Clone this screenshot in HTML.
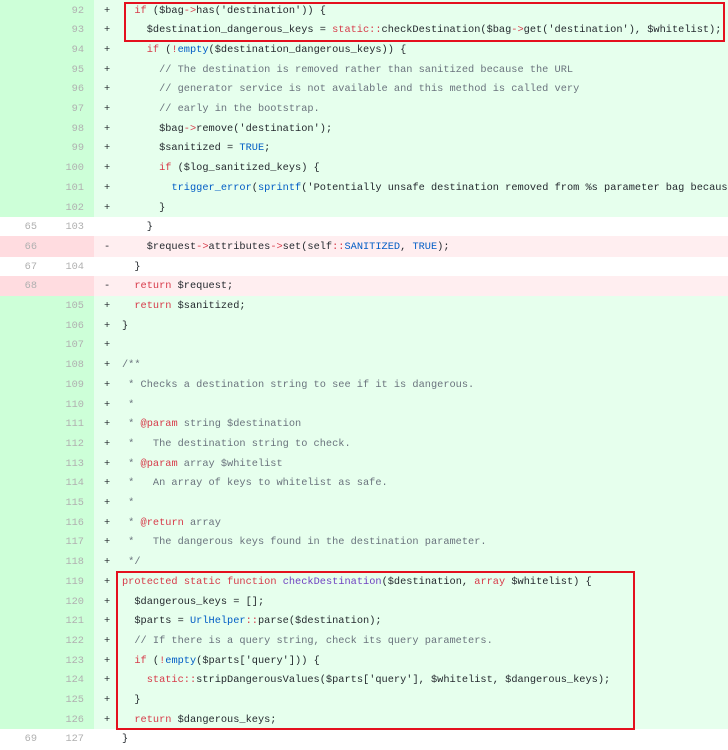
<!DOCTYPE html>
<html><head><meta charset="utf-8"><style>
*{margin:0;padding:0;box-sizing:border-box}
body{width:728px;height:750px;overflow:hidden;background:#fff;font-family:"Liberation Mono",monospace;font-size:10.3px;color:#24292e;position:relative}
.r{position:absolute;left:0;width:728px;height:20.4px;line-height:19.7px;white-space:pre}
.a{background:#e6ffed}.d{background:#ffeef0}
.n1,.n2{position:absolute;top:0;height:100%;width:47px;text-align:right;color:#b0b0b0;padding-right:10px;padding-top:1.5px}
.n1{left:0}.n2{left:47px}
.a .n1,.a .n2{background:#cdffd8}.d .n1,.d .n2{background:#ffdce0}
.m{position:absolute;left:104px;top:1.5px}
.c{position:absolute;left:122px;top:1.5px}
.k{color:#d73a49}.f{color:#005cc5}.p{color:#6f42c1}.cm{color:#6a737d}.s{color:#24292e}
.box{position:absolute;border:2.5px solid #e4101e}
</style></head><body>
<div class="r a" style="top:0px"><span class="n1"></span><span class="n2">92</span><span class="m">+</span><span class="c">  <span class="k">if</span> ($bag<span class="k">-&gt;</span>has(<span class="s">'destination'</span>)) {</span></div>
<div class="r a" style="top:19.7px"><span class="n1"></span><span class="n2">93</span><span class="m">+</span><span class="c">    $destination_dangerous_keys = <span class="k">static</span><span class="k">::</span>checkDestination($bag<span class="k">-&gt;</span>get(<span class="s">'destination'</span>), $whitelist);</span></div>
<div class="r a" style="top:39.4px"><span class="n1"></span><span class="n2">94</span><span class="m">+</span><span class="c">    <span class="k">if</span> (<span class="k">!</span><span class="f">empty</span>($destination_dangerous_keys)) {</span></div>
<div class="r a" style="top:59.1px"><span class="n1"></span><span class="n2">95</span><span class="m">+</span><span class="c">      <span class="cm">// The destination is removed rather than sanitized because the URL</span></span></div>
<div class="r a" style="top:78.8px"><span class="n1"></span><span class="n2">96</span><span class="m">+</span><span class="c">      <span class="cm">// generator service is not available and this method is called very</span></span></div>
<div class="r a" style="top:98.5px"><span class="n1"></span><span class="n2">97</span><span class="m">+</span><span class="c">      <span class="cm">// early in the bootstrap.</span></span></div>
<div class="r a" style="top:118.2px"><span class="n1"></span><span class="n2">98</span><span class="m">+</span><span class="c">      $bag<span class="k">-&gt;</span>remove(<span class="s">'destination'</span>);</span></div>
<div class="r a" style="top:137.9px"><span class="n1"></span><span class="n2">99</span><span class="m">+</span><span class="c">      $sanitized = <span class="f">TRUE</span>;</span></div>
<div class="r a" style="top:157.6px"><span class="n1"></span><span class="n2">100</span><span class="m">+</span><span class="c">      <span class="k">if</span> ($log_sanitized_keys) {</span></div>
<div class="r a" style="top:177.3px"><span class="n1"></span><span class="n2">101</span><span class="m">+</span><span class="c">        <span class="f">trigger_error</span>(<span class="f">sprintf</span>(<span class="s">'Potentially unsafe destination removed from %s parameter bag because</span></span></div>
<div class="r a" style="top:197px"><span class="n1"></span><span class="n2">102</span><span class="m">+</span><span class="c">      }</span></div>
<div class="r" style="top:216.7px"><span class="n1">65</span><span class="n2">103</span><span class="c">    }</span></div>
<div class="r d" style="top:236.4px"><span class="n1">66</span><span class="n2"></span><span class="m">-</span><span class="c">    $request<span class="k">-&gt;</span>attributes<span class="k">-&gt;</span>set(self<span class="k">::</span><span class="f">SANITIZED</span>, <span class="f">TRUE</span>);</span></div>
<div class="r" style="top:256.1px"><span class="n1">67</span><span class="n2">104</span><span class="c">  }</span></div>
<div class="r d" style="top:275.8px"><span class="n1">68</span><span class="n2"></span><span class="m">-</span><span class="c">  <span class="k">return</span> $request;</span></div>
<div class="r a" style="top:295.5px"><span class="n1"></span><span class="n2">105</span><span class="m">+</span><span class="c">  <span class="k">return</span> $sanitized;</span></div>
<div class="r a" style="top:315.2px"><span class="n1"></span><span class="n2">106</span><span class="m">+</span><span class="c">}</span></div>
<div class="r a" style="top:334.9px"><span class="n1"></span><span class="n2">107</span><span class="m">+</span><span class="c"></span></div>
<div class="r a" style="top:354.6px"><span class="n1"></span><span class="n2">108</span><span class="m">+</span><span class="c"><span class="cm">/**</span></span></div>
<div class="r a" style="top:374.3px"><span class="n1"></span><span class="n2">109</span><span class="m">+</span><span class="c"><span class="cm"> * Checks a destination string to see if it is dangerous.</span></span></div>
<div class="r a" style="top:394px"><span class="n1"></span><span class="n2">110</span><span class="m">+</span><span class="c"><span class="cm"> *</span></span></div>
<div class="r a" style="top:413.7px"><span class="n1"></span><span class="n2">111</span><span class="m">+</span><span class="c"><span class="cm"> * <span class="k">@param</span> string $destination</span></span></div>
<div class="r a" style="top:433.4px"><span class="n1"></span><span class="n2">112</span><span class="m">+</span><span class="c"><span class="cm"> *   The destination string to check.</span></span></div>
<div class="r a" style="top:453.1px"><span class="n1"></span><span class="n2">113</span><span class="m">+</span><span class="c"><span class="cm"> * <span class="k">@param</span> array $whitelist</span></span></div>
<div class="r a" style="top:472.8px"><span class="n1"></span><span class="n2">114</span><span class="m">+</span><span class="c"><span class="cm"> *   An array of keys to whitelist as safe.</span></span></div>
<div class="r a" style="top:492.5px"><span class="n1"></span><span class="n2">115</span><span class="m">+</span><span class="c"><span class="cm"> *</span></span></div>
<div class="r a" style="top:512.2px"><span class="n1"></span><span class="n2">116</span><span class="m">+</span><span class="c"><span class="cm"> * <span class="k">@return</span> array</span></span></div>
<div class="r a" style="top:531.9px"><span class="n1"></span><span class="n2">117</span><span class="m">+</span><span class="c"><span class="cm"> *   The dangerous keys found in the destination parameter.</span></span></div>
<div class="r a" style="top:551.6px"><span class="n1"></span><span class="n2">118</span><span class="m">+</span><span class="c"><span class="cm"> */</span></span></div>
<div class="r a" style="top:571.3px"><span class="n1"></span><span class="n2">119</span><span class="m">+</span><span class="c"><span class="k">protected</span> <span class="k">static</span> <span class="k">function</span> <span class="p">checkDestination</span>($destination, <span class="k">array</span> $whitelist) {</span></div>
<div class="r a" style="top:591px"><span class="n1"></span><span class="n2">120</span><span class="m">+</span><span class="c">  $dangerous_keys = [];</span></div>
<div class="r a" style="top:610.7px"><span class="n1"></span><span class="n2">121</span><span class="m">+</span><span class="c">  $parts = <span class="f">UrlHelper</span><span class="k">::</span>parse($destination);</span></div>
<div class="r a" style="top:630.4px"><span class="n1"></span><span class="n2">122</span><span class="m">+</span><span class="c">  <span class="cm">// If there is a query string, check its query parameters.</span></span></div>
<div class="r a" style="top:650.1px"><span class="n1"></span><span class="n2">123</span><span class="m">+</span><span class="c">  <span class="k">if</span> (<span class="k">!</span><span class="f">empty</span>($parts[<span class="s">'query'</span>])) {</span></div>
<div class="r a" style="top:669.8px"><span class="n1"></span><span class="n2">124</span><span class="m">+</span><span class="c">    <span class="k">static</span><span class="k">::</span>stripDangerousValues($parts[<span class="s">'query'</span>], $whitelist, $dangerous_keys);</span></div>
<div class="r a" style="top:689.5px"><span class="n1"></span><span class="n2">125</span><span class="m">+</span><span class="c">  }</span></div>
<div class="r a" style="top:709.2px;height:19.7px"><span class="n1"></span><span class="n2">126</span><span class="m">+</span><span class="c">  <span class="k">return</span> $dangerous_keys;</span></div>
<div class="r" style="top:728.9px"><span class="n1">69</span><span class="n2">127</span><span class="c">}</span></div>
<div class="box" style="left:124px;top:2px;width:601px;height:40px"></div>
<div class="box" style="left:116px;top:571px;width:519px;height:159px"></div>
</body></html>
